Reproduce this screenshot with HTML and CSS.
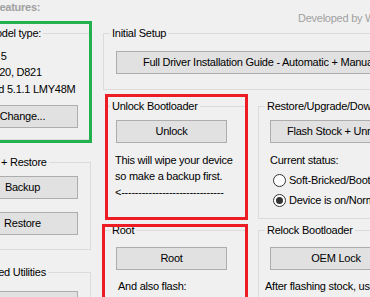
FILE: index.html
```html
<!DOCTYPE html>
<html>
<head>
<meta charset="utf-8">
<link rel="stylesheet" href="styles.css">
</head>
<body>
<div class="app">
  <div class="col-left">
    <div class="title">Features:</div>
    <div class="hl hl-green g-model">
      <fieldset class="grp">
        <legend>Your model type:</legend>
        <div class="body body-model">
          <div class="mline">Nexus 5</div>
          <div class="mline m2">LG-D820, D821</div>
          <div class="mline m3">Android 5.1.1 LMY48M</div>
          <button class="btn btn-l btn-change">Change...</button>
        </div>
      </fieldset>
    </div>
    <fieldset class="grp g-backup">
      <legend>Backup + Restore</legend>
      <div class="body body-backup">
        <button class="btn btn-l">Backup</button>
        <button class="btn btn-l btn-restore">Restore</button>
      </div>
    </fieldset>
    <fieldset class="grp g-utils">
      <legend>Advanced Utilities</legend>
      <div class="body body-utils">
        <button class="btn btn-l">Launch</button>
      </div>
    </fieldset>
  </div>
  <div class="col-right">
    <div class="credit">Developed by WugFresh</div>
    <fieldset class="grp g-setup">
      <legend>Initial Setup</legend>
      <div class="body body-setup">
        <button class="btn btn-wide">Full Driver Installation Guide - Automatic + Manual</button>
      </div>
    </fieldset>
    <div class="pair pair-1">
      <div class="hl hl-red1 mid">
        <fieldset class="grp">
          <legend>Unlock Bootloader</legend>
          <div class="body body-unlock">
            <button class="btn btn-m">Unlock</button>
            <div class="note">
              <div>This will wipe your device</div>
              <div>so make a backup first.</div>
              <div>&lt;------------------------------</div>
            </div>
          </div>
        </fieldset>
      </div>
      <fieldset class="grp side">
        <legend>Restore/Upgrade/Downgrade</legend>
        <div class="body body-restore">
          <button class="btn btn-r">Flash Stock + Unroot</button>
          <div class="status">Current status:</div>
          <div class="radios">
            <div class="radio"><span class="dot"></span><span>Soft-Bricked/Bootloop</span></div>
            <div class="radio"><span class="dot checked"></span><span>Device is on/Normal</span></div>
          </div>
        </div>
      </fieldset>
    </div>
    <div class="pair pair-2">
      <div class="hl hl-red2 mid">
        <fieldset class="grp">
          <legend>Root</legend>
          <div class="body body-root">
            <button class="btn btn-m">Root</button>
            <div class="also">And also flash:</div>
          </div>
        </fieldset>
      </div>
      <fieldset class="grp side">
        <legend>Relock Bootloader</legend>
        <div class="body body-relock">
          <button class="btn btn-r">OEM Lock</button>
          <div class="after">After flashing stock, use this to relock.</div>
        </div>
      </fieldset>
    </div>
  </div>
</div>
</body>
</html>
```

FILE: styles.css
```css
* { box-sizing: border-box; }
html, body { margin: 0; padding: 0; }
body {
  background: #f0f0f0;
  width: 370px;
  height: 297px;
  overflow: hidden;
  font-family: "Liberation Sans", Arial, sans-serif;
  font-size: 11px;
  line-height: 13px;
  letter-spacing: -0.25px;
  color: #000;
}
.app {
  display: flex;
  align-items: flex-start;
  margin-left: -46px;
  width: 520px;
}
.col-left { flex: none; width: 137px; }
.col-right { flex: none; width: 330px; margin-left: 12px; }

.title {
  margin-top: 1px;
  padding-left: 39px;
  font-weight: bold;
  color: #a0a0a0;
  white-space: nowrap;
}
.credit {
  margin-top: 12px;
  padding-left: 195px;
  color: #a0a0a0;
  white-space: nowrap;
}

.grp {
  margin: 0;
  padding: 0;
  min-width: 0;
  border: 1px solid #dcdcdc;
}
.grp > legend {
  margin-left: 6px;
  padding: 0 2px;
  line-height: 13px;
  white-space: nowrap;
}
.body { padding: 0; }

.btn {
  display: block;
  height: 23px;
  padding: 0;
  margin: 0;
  border: 1px solid #adadad;
  background: #e1e1e1;
  font: inherit;
  letter-spacing: inherit;
  line-height: 21px;
  color: #000;
  text-align: center;
  white-space: nowrap;
  overflow: hidden;
}
.btn-l { width: 111px; margin-left: 12px; }
.btn-m { width: 111px; margin-left: 12px; }
.btn-r { width: 132px; margin-left: 11px; }
.btn-wide { width: 286px; margin-left: 12px; }

/* highlight annotations */
.hl { position: relative; }
.hl::after {
  content: "";
  position: absolute;
  pointer-events: none;
}
.hl-green::after {
  top: -6px; right: -1px; bottom: -3px; left: -10px;
  border: 3px solid #22b14c;
}
.hl-red1::after {
  top: -6px; right: 1px; bottom: -1px; left: 2px;
  border: 3px solid #ed1c24;
}
.hl-red2::after {
  top: 0; right: 1px; bottom: -2px; left: -1px;
  border: 3px solid #ed1c24;
}

/* left column */
.g-model { margin-top: 13px; }
.body-model { padding: 10px 0 11px 0; }
.mline { padding-left: 13px; white-space: nowrap; }
.m2 { margin-top: 3px; }
.m3 { margin-top: 4px; }
.btn-change { margin-top: 9px; }

.g-backup { margin-top: 16px; }
.body-backup { padding: 7px 0 14px 0; }
.btn-restore { margin-top: 13px; }

.g-utils { margin-top: 16px; }
.body-utils { padding: 12px 0 20px 0; }

/* right part */
.g-setup { margin-top: 2px; width: 311px; }
.body-setup { padding: 11px 0 15px 0; }

.pair { display: flex; gap: 9px; align-items: stretch; }
.pair-1 { margin-top: 10px; }
.pair-2 { margin-top: 5px; }
.mid { flex: none; width: 146px; display: flex; }
.mid > .grp { flex: 1; }
.side { flex: none; width: 170px; }

/* group borders sit beneath the red annotation frames */
.hl-red1 > .grp { margin: 0 2px 0 3px; }
.hl-red1 > .grp > legend { margin-left: 3px; }
.hl-red1 .btn-m { margin-left: 9px; }
.hl-red2 > .grp { margin-right: 2px; }

.body-unlock { padding: 7px 0 18px 0; }
.note { margin: 9px 0 0 8px; line-height: 16px; white-space: nowrap; }

.body-restore { padding: 7px 0 8px 0; }
.status { margin: 9px 0 0 11px; line-height: 16px; white-space: nowrap; }
.radios { margin-top: 2px; }
.radio {
  display: flex;
  align-items: center;
  gap: 3px;
  height: 20px;
  padding-left: 14px;
  white-space: nowrap;
}
.dot {
  flex: none;
  position: relative;
  width: 13px;
  height: 13px;
  border: 1px solid #333;
  border-radius: 50%;
  background: #fff;
}
.dot.checked::after {
  content: "";
  position: absolute;
  inset: 2px;
  border-radius: 50%;
  background: #333;
}

.body-root { padding: 10px 0 20px 0; }
.also { margin: 10px 0 0 14px; white-space: nowrap; }
.body-relock { padding: 10px 0 20px 0; }
.after { margin: 10px 0 0 6px; white-space: nowrap; }
```
